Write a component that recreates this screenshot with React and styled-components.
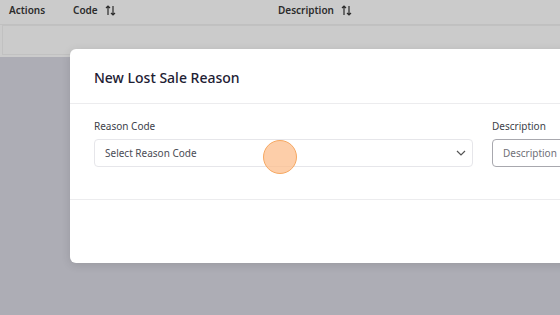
import React from "react";
import styled, { createGlobalStyle } from "styled-components";

const Global = createGlobalStyle`
  html, body { margin: 0; padding: 0; }
  body {
    width: 560px;
    height: 315px;
    overflow: hidden;
    font-family: "Noto Sans", "Open Sans", sans-serif;
    background: #adadb5;
  }
`;

const Page = styled.div`
  position: relative;
  width: 560px;
  height: 315px;
  overflow: hidden;
`;

const TableArea = styled.div`
  background: #cbcbcb;
  height: 57px;
  display: flex;
  flex-direction: column;
`;

const HeaderRow = styled.div`
  display: flex;
  align-items: center;
  height: 25px;
  border-bottom: 1px solid #c0c0c0;
  padding: 0 0 4px 9px;
  box-sizing: border-box;
`;

const HeadCell = styled.div`
  width: ${(p) => p.$w}px;
  flex-shrink: 0;
  display: flex;
  align-items: center;
  gap: 7px;
  font-size: 10px;
  font-weight: 600;
  color: #2b2b2b;
`;

const EmptyRow = styled.div`
  margin: 0 0 0 2px;
  height: 30px;
  border: 1px solid #c1c1c1;
  border-right: none;
  box-sizing: border-box;
`;

const Modal = styled.div`
  position: absolute;
  left: 70px;
  top: 49px;
  width: 620px;
  height: 214px;
  background: #fff;
  border-radius: 6px;
  box-shadow: 0 2px 10px rgba(0, 0, 0, 0.12);
  display: flex;
  flex-direction: column;
`;

const ModalHeader = styled.div`
  height: 55px;
  padding: 2px 24px 0;
  display: flex;
  align-items: center;
  border-bottom: 1px solid #ececee;
  box-sizing: border-box;
`;

const Title = styled.h2`
  margin: 0;
  font-size: 14px;
  font-weight: 500;
  color: #1d2033;
`;

const ModalBody = styled.div`
  height: 96px;
  padding: 15px 24px 0;
  box-sizing: border-box;
  display: flex;
  gap: 19px;
  border-bottom: 1px solid #ececee;
`;

const Field = styled.div`
  width: ${(p) => p.$w}px;
  flex-shrink: 0;
  display: flex;
  flex-direction: column;
  gap: 6px;
`;

const Label = styled.label`
  font-size: 10px;
  color: #3d3f4a;
`;

const SelectBox = styled.div`
  height: 28px;
  border: 1px solid #e6e6ea;
  border-radius: 4px;
  display: flex;
  align-items: center;
  justify-content: space-between;
  padding: 0 5px 0 10px;
  box-sizing: border-box;
  font-size: 10px;
  color: #4a4c55;
`;

const InputBox = styled.div`
  height: 28px;
  border: 1px solid #a8a8ae;
  border-radius: 4px;
  display: flex;
  align-items: center;
  padding: 0 10px;
  box-sizing: border-box;
  font-size: 10px;
  color: #707078;
`;

const Click = styled.div`
  position: absolute;
  left: 263px;
  top: 140px;
  width: 34px;
  height: 34px;
  border-radius: 50%;
  background: rgba(252, 190, 140, 0.75);
  border: 1.5px solid #f6a862;
  box-sizing: border-box;
`;

const SortIcon = () => (
  <svg width="11" height="11" viewBox="0 0 11 11" fill="none" stroke="#2b2b2b" strokeWidth="1.2">
    <path d="M3 10V1M1 3l2-2 2 2" />
    <path d="M8 1v9M6 8l2 2 2-2" />
  </svg>
);

const Chevron = () => (
  <svg width="12" height="12" viewBox="0 0 12 12" fill="none" stroke="#555" strokeWidth="1.2">
    <path d="M2 4l4 4 4-4" />
  </svg>
);

export default function App() {
  return (
    <Page>
      <Global />
      <TableArea>
        <HeaderRow>
          <HeadCell $w={64}>Actions</HeadCell>
          <HeadCell $w={205}>
            Code <SortIcon />
          </HeadCell>
          <HeadCell $w={200}>
            Description <SortIcon />
          </HeadCell>
        </HeaderRow>
        <EmptyRow />
      </TableArea>
      <Modal>
        <ModalHeader>
          <Title>New Lost Sale Reason</Title>
        </ModalHeader>
        <ModalBody>
          <Field $w={379}>
            <Label>Reason Code</Label>
            <SelectBox>
              Select Reason Code
              <Chevron />
            </SelectBox>
          </Field>
          <Field $w={120}>
            <Label>Description</Label>
            <InputBox>Description</InputBox>
          </Field>
        </ModalBody>
      </Modal>
      <Click />
    </Page>
  );
}
